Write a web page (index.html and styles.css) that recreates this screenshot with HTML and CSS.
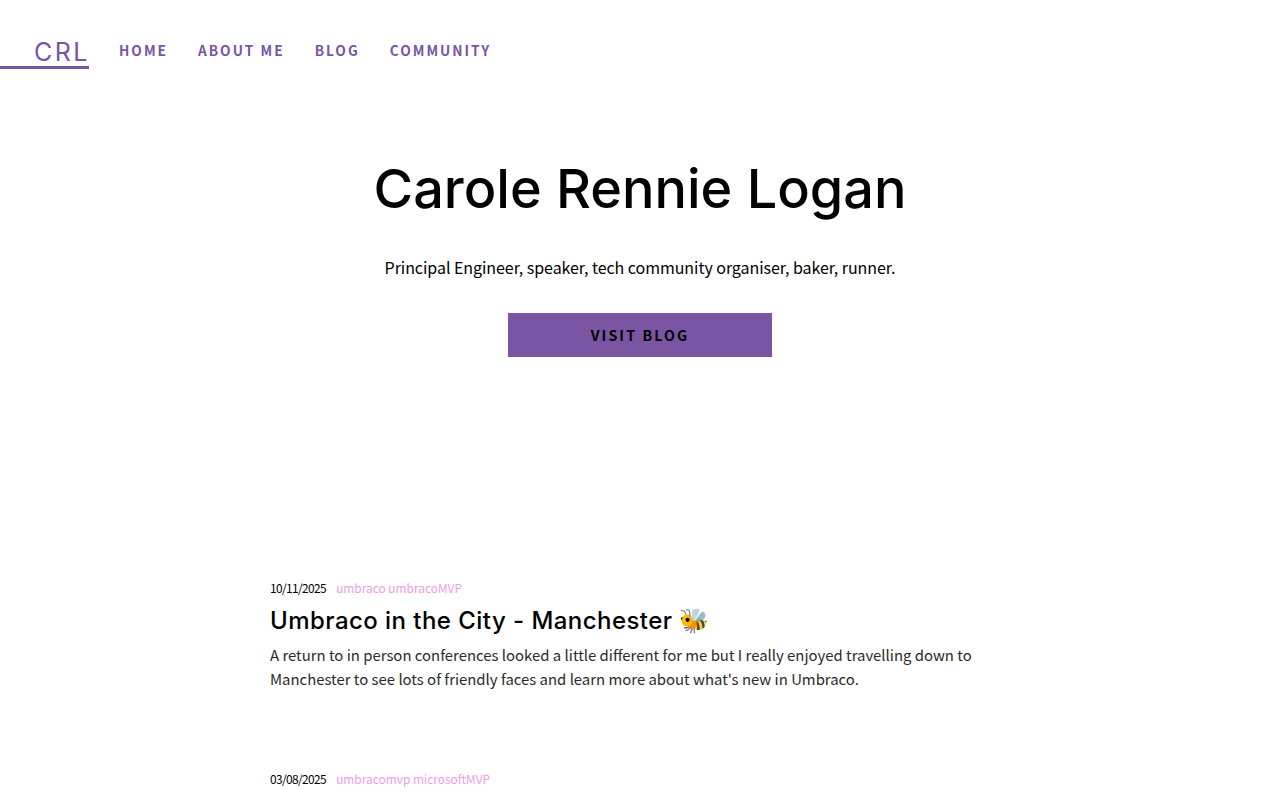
FILE: index.html
```html
<!DOCTYPE html>
<html lang="en">
<head>
<meta charset="utf-8">
<title>Carole Rennie Logan</title>
<link rel="stylesheet" href="styles.css">
</head>
<body>
<header class="site-header">
  <a class="logo" href="#">CRL</a>
  <nav class="nav">
    <a href="#">HOME</a>
    <a href="#">ABOUT ME</a>
    <a href="#">BLOG</a>
    <a href="#">COMMUNITY</a>
  </nav>
</header>
<section class="hero">
  <h1>Carole Rennie Logan</h1>
  <p>Principal Engineer, speaker, tech community organiser, baker, runner.</p>
  <a class="button" href="#">VISIT BLOG</a>
</section>
<main class="posts">
  <article class="post">
    <div class="meta"><span class="date">10/11/2025</span><span class="tags">umbraco umbracoMVP</span></div>
    <h2>Umbraco in the City - Manchester 🐝</h2>
    <p>A return to in person conferences looked a little different for me but I really enjoyed travelling down to Manchester to see lots of friendly faces and learn more about what's new in Umbraco.</p>
  </article>
  <article class="post">
    <div class="meta"><span class="date">03/08/2025</span><span class="tags">umbracomvp microsoftMVP</span></div>
  </article>
</main>
</body>
</html>
```
FILE: styles.css
```css
* { box-sizing: border-box; }
html, body { margin: 0; height: 800px; overflow: hidden; }
body { background: #fff; font-family: "Noto Sans CJK JP", "Noto Sans", sans-serif; color: #000; }
a { text-decoration: none; }
.site-header { display: flex; align-items: flex-start; height: 69px; padding-top: 35px; }
.logo { display: block; width: 89px; height: 34px; padding-left: 34px; border-bottom: 3px solid #7a55a3; color: #7a55a3; font-family: Inter, sans-serif; font-size: 25px; line-height: 34px; font-weight: 400; letter-spacing: 2.5px; }
.nav { display: flex; gap: 30px; margin-left: 30px; }
.nav a { color: #7a55a3; font-size: 13.7px; line-height: 30px; font-weight: 700; letter-spacing: 2px; }
.hero { display: flex; flex-direction: column; align-items: center; padding-top: 85px; }
.hero h1 { margin: 0; font-family: Inter, sans-serif; font-size: 54px; line-height: 70px; font-weight: 500; color: #000; }
.hero p { margin: 29px 0 0; font-size: 16px; line-height: 28px; letter-spacing: -.05px; }
.button { display: block; width: 264px; height: 44px; margin-top: 32px; background: #7a55a3; color: #000; text-align: center; font-size: 14.2px; line-height: 44px; font-weight: 700; letter-spacing: 2.1px; }
.posts { width: 740px; margin: 222px auto 0 270px; }
.post { height: 191px; }
.meta { display: flex; gap: 10px; font-size: 11.9px; line-height: 18px; }
.date { letter-spacing: -.6px; }
.tags { color: #f19be6; }
.post h2 { margin: 8px 0 0; font-family: Inter, sans-serif; font-size: 24px; line-height: 32px; font-weight: 500; letter-spacing: .45px; }
.post p { margin: 6px 0 0; font-size: 14.9px; line-height: 24px; color: #2b2b2b; }
```
